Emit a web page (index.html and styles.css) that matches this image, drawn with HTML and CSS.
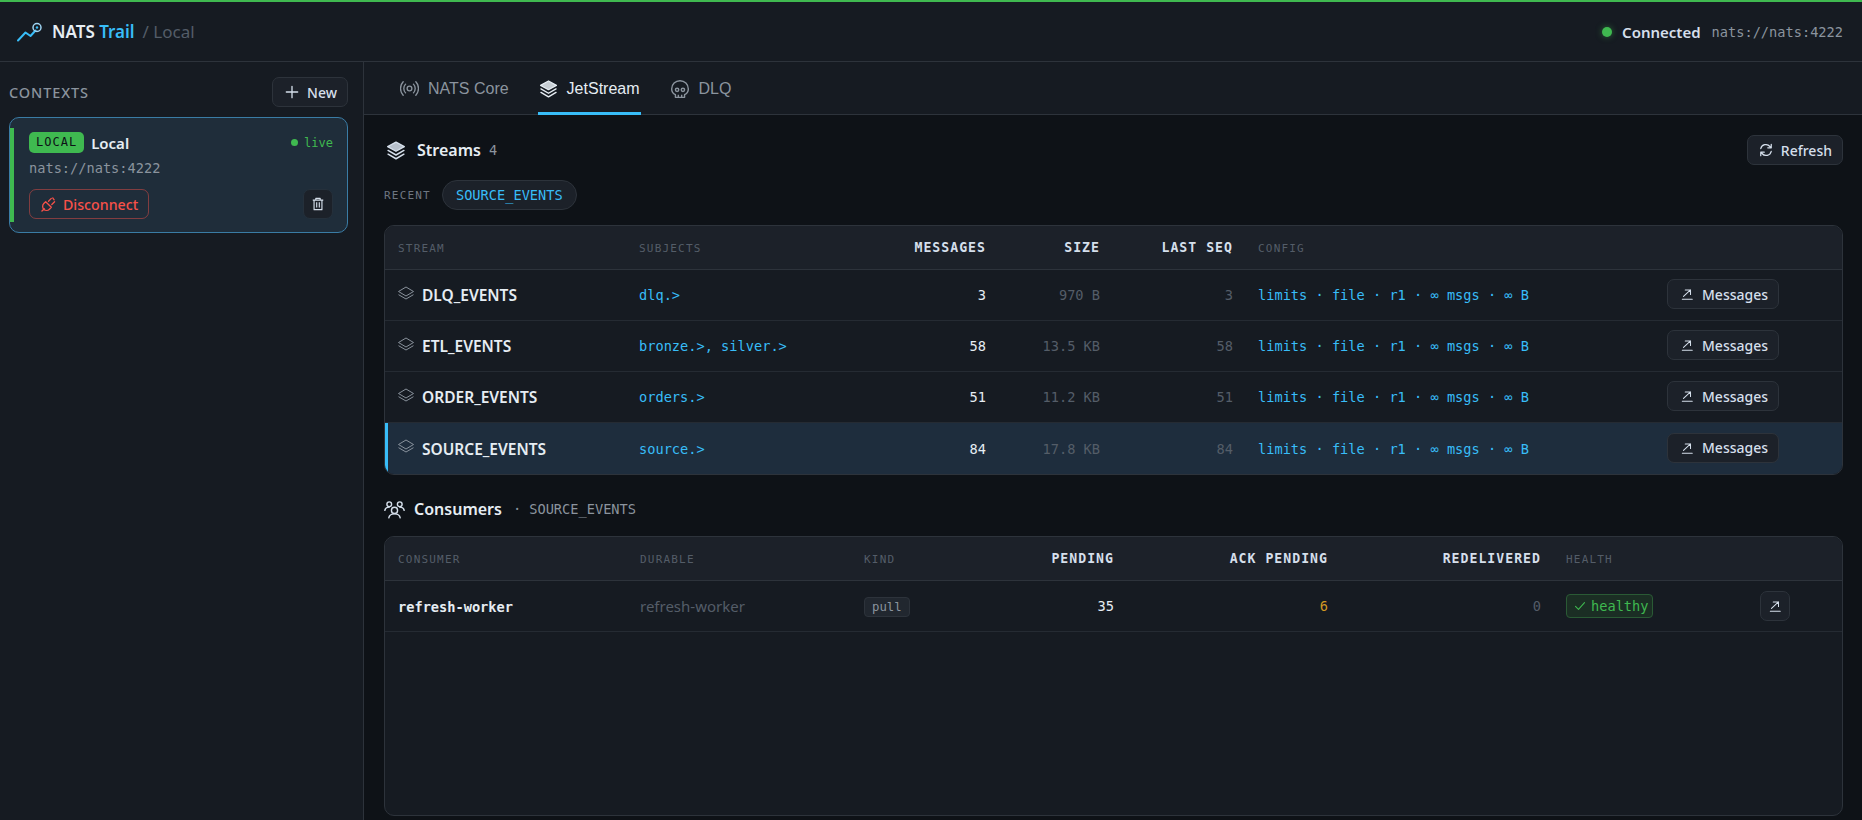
FILE: index.html
```html
<!DOCTYPE html>
<html lang="en">

<head>
    <meta charset="UTF-8">
    <meta name="viewport" content="width=device-width, initial-scale=1.0">
    <title>NATS Trail</title>
    <link rel="stylesheet" href="styles.css">
</head>

<body>
    <!-- Shared icons -->
    <svg class="sprite" xmlns="http://www.w3.org/2000/svg">
        <symbol id="i-stack-fill" viewBox="0 0 24 24">
            <path d="M12 2.500 22 8l-10 5.500L2 8z" fill="currentColor" fill-opacity=".85" stroke="currentColor" stroke-width="1.6" stroke-linejoin="round" />
            <path d="M2.500 12.500 12 18l9.500-5.500M2.500 17 12 22.500 21.500 17" fill="none" stroke="currentColor" stroke-width="1.800" stroke-linecap="round" stroke-linejoin="round" />
        </symbol>
        <symbol id="i-layer" viewBox="0 0 24 24">
            <path d="M12 4 22 10l-10 6L2 10z" fill="none" stroke="currentColor" stroke-width="1.300" stroke-linejoin="round" />
            <path d="M2.500 14.500 12 20l9.500-5.500" fill="none" stroke="currentColor" stroke-width="1.300" stroke-linecap="round" stroke-linejoin="round" />
        </symbol>
        <symbol id="i-open" viewBox="0 0 24 24">
            <path d="M6 16 18 5M9 5h9v8M4 21h17" fill="none" stroke="currentColor" stroke-width="1.800" stroke-linecap="round" stroke-linejoin="round" />
        </symbol>
    </svg>

    <div class="app">
        <header class="topbar">
            <div class="brand">
                <svg class="logo" viewBox="0 0 26 20" width="26" height="20">
                    <path d="M1 18.500 8.500 10.500 13.500 14 18.500 8.500" fill="none" stroke="#38bdf8" stroke-width="2" stroke-linecap="round" stroke-linejoin="round" />
                    <circle cx="20" cy="5.500" r="4" fill="none" stroke="#9fd4f2" stroke-width="1.500" />
                    <circle cx="20" cy="5.500" r="1.200" fill="#38bdf8" />
                </svg>
                <span class="brand-name">NATS <span class="accent">Trail</span></span>
                <span class="brand-ctx">/ Local</span>
            </div>
            <div class="status">
                <span class="status-dot"></span>
                <span class="status-text">Connected</span>
                <span class="mono status-url">nats://nats:4222</span>
            </div>
        </header>

        <div class="layout">
            <aside class="sidebar">
                <div class="sidebar-head">
                    <span class="sidebar-title">CONTEXTS</span>
                    <button class="btn">
                        <svg viewBox="0 0 16 16" width="14" height="14"><path d="M8 1.500v13M1.500 8h13" stroke="currentColor" stroke-width="1.500" stroke-linecap="round" /></svg>
                        New
                    </button>
                </div>
                <div class="ctx-card">
                    <div class="ctx-row">
                        <span class="ctx-badge">LOCAL</span>
                        <span class="ctx-name">Local</span>
                        <span class="ctx-live"><i></i>live</span>
                    </div>
                    <div class="mono ctx-url">nats://nats:4222</div>
                    <div class="ctx-actions">
                        <button class="btn-danger">
                            <svg viewBox="0 0 16 16" width="15" height="15" fill="none" stroke="currentColor" stroke-width="1.400" stroke-linecap="round" stroke-linejoin="round"><path d="M5 5 11 11 9 13a4 4 0 0 1-6-6zM3.500 12.500 1 15M8 4.500 11 1.500M11.500 8 14.500 5M12.500 1 14 3" /></svg>
                            Disconnect
                        </button>
                        <button class="btn-icon">
                            <svg viewBox="0 0 16 16" width="14" height="14" fill="none" stroke="currentColor" stroke-width="1.300" stroke-linejoin="round"><path d="M2 3.500h12M5.500 3.500V1.500h5v2M3.500 3.500v11h9v-11M6.500 6v6M9.500 6v6" /></svg>
                        </button>
                    </div>
                </div>
            </aside>

            <main class="main">
                <nav class="tabs">
                    <a class="tab">
                        <svg viewBox="0 0 24 24" width="19" height="19" fill="none" stroke="currentColor" stroke-width="1.700" stroke-linecap="round"><circle cx="12" cy="12" r="3" /><path d="M7 6.500a8 8 0 0 0 0 11M17 6.500a8 8 0 0 1 0 11M4 3.500a12.500 12.500 0 0 0 0 17M20 3.500a12.500 12.500 0 0 1 0 17" /></svg>
                        NATS Core
                    </a>
                    <a class="tab tab-active">
                        <svg width="19" height="19"><use href="#i-stack-fill" /></svg>
                        JetStream
                    </a>
                    <a class="tab">
                        <svg viewBox="0 0 24 24" width="20" height="20" fill="none" stroke="currentColor" stroke-width="1.700" stroke-linejoin="round"><path d="M12 2a10 10 0 0 0-10 10c0 3.500 1.700 5.500 4.500 6.800V22h11v-3.200C20.300 17.500 22 15.500 22 12A10 10 0 0 0 12 2z" /><circle cx="8.500" cy="13" r="2" /><circle cx="15.500" cy="13" r="2" /><path d="M10 22v-3M14 22v-3" /></svg>
                        DLQ
                    </a>
                </nav>

                <div class="content">
                    <div class="section-head">
                        <svg class="section-icon" width="20" height="20"><use href="#i-stack-fill" /></svg>
                        <h2>Streams</h2>
                        <span class="count">4</span>
                        <button class="btn btn-refresh">
                            <svg viewBox="0 0 16 16" width="14" height="14" fill="none" stroke="currentColor" stroke-width="1.400" stroke-linecap="round" stroke-linejoin="round"><path d="M2 6.500A6 6 0 0 1 12.500 4L14 5.500M14 1.500v4h-4M14 9.500A6 6 0 0 1 3.500 12L2 10.500M2 14.500v-4h4" /></svg>
                            Refresh
                        </button>
                    </div>

                    <div class="recent">
                        <span class="mono recent-label">RECENT</span>
                        <span class="mono recent-pill">SOURCE_EVENTS</span>
                    </div>

                    <div class="table-wrap">
                        <table class="data streams">
                            <colgroup>
                                <col class="c-242"><col class="c-214"><col class="c-157"><col class="c-114"><col class="c-133"><col class="c-409"><col>
                            </colgroup>
                            <thead>
                                <tr>
                                    <th>STREAM</th>
                                    <th>SUBJECTS</th>
                                    <th class="num">MESSAGES</th>
                                    <th class="num">SIZE</th>
                                    <th class="num">LAST SEQ</th>
                                    <th class="cfg">CONFIG</th>
                                    <th></th>
                                </tr>
                            </thead>
                            <tbody>
                                <tr>
                                    <td><span class="stream-name"><svg width="18" height="18"><use href="#i-layer" /></svg>DLQ_EVENTS</span></td>
                                    <td class="mono link">dlq.&gt;</td>
                                    <td class="mono val">3</td>
                                    <td class="mono val dim">970 B</td>
                                    <td class="mono val dim">3</td>
                                    <td class="mono link cfg">limits · file · r1 · ∞ msgs · ∞ B</td>
                                    <td class="act"><button class="btn"><svg width="14" height="14"><use href="#i-open" /></svg>Messages</button></td>
                                </tr>
                                <tr>
                                    <td><span class="stream-name"><svg width="18" height="18"><use href="#i-layer" /></svg>ETL_EVENTS</span></td>
                                    <td class="mono link">bronze.&gt;, silver.&gt;</td>
                                    <td class="mono val">58</td>
                                    <td class="mono val dim">13.5 KB</td>
                                    <td class="mono val dim">58</td>
                                    <td class="mono link cfg">limits · file · r1 · ∞ msgs · ∞ B</td>
                                    <td class="act"><button class="btn"><svg width="14" height="14"><use href="#i-open" /></svg>Messages</button></td>
                                </tr>
                                <tr>
                                    <td><span class="stream-name"><svg width="18" height="18"><use href="#i-layer" /></svg>ORDER_EVENTS</span></td>
                                    <td class="mono link">orders.&gt;</td>
                                    <td class="mono val">51</td>
                                    <td class="mono val dim">11.2 KB</td>
                                    <td class="mono val dim">51</td>
                                    <td class="mono link cfg">limits · file · r1 · ∞ msgs · ∞ B</td>
                                    <td class="act"><button class="btn"><svg width="14" height="14"><use href="#i-open" /></svg>Messages</button></td>
                                </tr>
                                <tr class="selected">
                                    <td><span class="stream-name"><svg width="18" height="18"><use href="#i-layer" /></svg>SOURCE_EVENTS</span></td>
                                    <td class="mono link">source.&gt;</td>
                                    <td class="mono val">84</td>
                                    <td class="mono val dim">17.8 KB</td>
                                    <td class="mono val dim">84</td>
                                    <td class="mono link cfg">limits · file · r1 · ∞ msgs · ∞ B</td>
                                    <td class="act"><button class="btn"><svg width="14" height="14"><use href="#i-open" /></svg>Messages</button></td>
                                </tr>
                            </tbody>
                        </table>
                    </div>

                    <div class="section-head consumers-head">
                        <svg class="section-icon" viewBox="0 0 24 24" width="21" height="21" fill="none" stroke="currentColor" stroke-width="1.600" stroke-linecap="round"><circle cx="12" cy="13" r="3.500" /><path d="M5.500 21.500c.5-3 3-4.500 6.500-4.500s6 1.500 6.500 4.500" /><circle cx="6" cy="6" r="2.700" /><circle cx="18" cy="6" r="2.700" /><path d="M1 13c.3-2.500 2-3.700 5-3.700M23 13c-.3-2.500-2-3.700-5-3.700" /></svg>
                        <h2>Consumers</h2>
                        <span class="crumb-sep">·</span>
                        <span class="mono crumb">SOURCE_EVENTS</span>
                    </div>

                    <div class="table-wrap table-fill">
                        <table class="data consumers">
                            <colgroup>
                                <col class="c-243"><col class="c-224"><col class="c-109"><col class="c-165"><col class="c-214"><col class="c-213"><col class="c-195"><col>
                            </colgroup>
                            <thead>
                                <tr>
                                    <th>CONSUMER</th>
                                    <th>DURABLE</th>
                                    <th>KIND</th>
                                    <th class="num">PENDING</th>
                                    <th class="num">ACK PENDING</th>
                                    <th class="num">REDELIVERED</th>
                                    <th class="cfg">HEALTH</th>
                                    <th></th>
                                </tr>
                            </thead>
                            <tbody>
                                <tr>
                                    <td class="mono consumer-name">refresh-worker</td>
                                    <td class="durable">refresh-worker</td>
                                    <td><span class="mono kind">pull</span></td>
                                    <td class="mono val">35</td>
                                    <td class="mono val warn">6</td>
                                    <td class="mono val dim">0</td>
                                    <td class="cfg">
                                        <span class="mono health">
                                            <svg viewBox="0 0 16 16" width="12" height="12" fill="none" stroke="currentColor" stroke-width="1.400" stroke-linecap="round" stroke-linejoin="round"><path d="M2 8.500 6 12.500 14 3.500" /></svg>
                                            healthy
                                        </span>
                                    </td>
                                    <td><button class="btn btn-square"><svg width="14" height="14"><use href="#i-open" /></svg></button></td>
                                </tr>
                            </tbody>
                        </table>
                    </div>
                </div>
            </main>
        </div>
    </div>
</body>

</html>
```

FILE: styles.css
```css
* {
    box-sizing: border-box;
}

body {
    font-family: "Noto Sans", Arial, sans-serif;
    background-color: #0e1217;
    color: #e6edf3;
    margin: 0;
    padding: 0;
    overflow: hidden;
}

.sprite {
    display: none;
}

.mono {
    font-family: "DejaVu Sans Mono", monospace;
}

.accent {
    color: #38bdf8;
}

.app {
    display: flex;
    flex-direction: column;
    height: 100vh;
}

/* Top bar */
.topbar {
    display: flex;
    align-items: center;
    justify-content: space-between;
    height: 62px;
    padding: 0 19px 0 17px;
    background-color: #161b22;
    border-top: 2px solid #3fb950;
    border-bottom: 1px solid #2d333b;
}

.brand {
    display: flex;
    align-items: center;
}

.logo {
    margin-right: 9px;
}

.brand-name {
    font-size: 17px;
    font-weight: 600;
}

.brand-ctx {
    margin-left: 8px;
    font-size: 17px;
    color: #545d68;
}

.status {
    display: flex;
    align-items: center;
}

.status-dot {
    width: 10px;
    height: 10px;
    border-radius: 50%;
    background-color: #3fb950;
    box-shadow: 0 0 6px rgba(63, 185, 80, 0.5);
    margin-right: 10px;
}

.status-text {
    font-size: 15px;
    font-weight: 600;
    color: #d5dfeb;
    margin-right: 11px;
}

.status-url {
    font-size: 13.650px;
    color: #8b949e;
}

.layout {
    display: flex;
    flex: 1;
    min-height: 0;
}

/* Sidebar */
.sidebar {
    width: 364px;
    padding: 15px 15px 0 9px;
    background-color: #161b22;
    border-right: 1px solid #2d333b;
}

.sidebar-head {
    display: flex;
    align-items: center;
    justify-content: space-between;
    margin-bottom: 10px;
}

.sidebar-title {
    font-size: 14.500px;
    font-weight: 500;
    letter-spacing: 0.9px;
    color: #8b949e;
}

.btn {
    display: inline-flex;
    align-items: center;
    gap: 8px;
    height: 30px;
    padding: 0 10px 0 12px;
    font-family: "Noto Sans", Arial, sans-serif;
    font-size: 14px;
    font-weight: 500;
    color: #d5dfeb;
    background-color: #1c2129;
    border: 1px solid #2d333b;
    border-radius: 7px;
}

.ctx-card {
    position: relative;
    height: 116px;
    padding: 14px 14px 0 19px;
    background-color: #1f2d3a;
    border: 1px solid #3a7ca5;
    border-radius: 10px;
}

.ctx-card::before {
    content: "";
    position: absolute;
    left: 0;
    top: 10px;
    bottom: 10px;
    width: 4px;
    background-color: #3fb950;
}

.ctx-row {
    display: flex;
    align-items: center;
    height: 21px;
}

.ctx-badge {
    padding: 0 7px;
    height: 21px;
    line-height: 21px;
    font-family: "DejaVu Sans Mono", monospace;
    font-size: 12px;
    letter-spacing: 1px;
    color: #0d1117;
    background-color: #3fb950;
    border-radius: 5px;
}

.ctx-name {
    margin-left: 7px;
    font-size: 15px;
    font-weight: 600;
}

.ctx-live {
    display: flex;
    align-items: center;
    gap: 6px;
    margin-left: auto;
    font-family: "DejaVu Sans Mono", monospace;
    font-size: 12px;
    color: #3fb950;
}

.ctx-live i {
    width: 7px;
    height: 7px;
    border-radius: 50%;
    background-color: #3fb950;
}

.ctx-url {
    margin-top: 7px;
    font-size: 13.650px;
    color: #8b949e;
}

.ctx-actions {
    display: flex;
    align-items: center;
    justify-content: space-between;
    margin-top: 12px;
}

.btn-danger {
    display: inline-flex;
    align-items: center;
    gap: 7px;
    height: 30px;
    margin-top: 1px;
    padding: 0 10px 0 11px;
    font-family: "Noto Sans", Arial, sans-serif;
    font-size: 14.200px;
    font-weight: 500;
    color: #f85149;
    background-color: transparent;
    border: 1px solid rgba(248, 81, 73, 0.45);
    border-radius: 7px;
}

.btn-icon {
    display: flex;
    align-items: center;
    justify-content: center;
    width: 30px;
    height: 30px;
    padding: 0;
    color: #d5dfeb;
    background-color: #1c2129;
    border: 1px solid #25303b;
    border-radius: 7px;
}

/* Main */
.main {
    display: flex;
    flex-direction: column;
    flex: 1;
    min-width: 0;
}

.tabs {
    display: flex;
    height: 53px;
    padding-left: 35px;
    gap: 28px;
    background-color: #161b22;
    border-bottom: 1px solid #2d333b;
}

.tab {
    display: flex;
    align-items: center;
    gap: 9px;
    height: 53px;
    padding: 0 1px;
    font-family: "Liberation Sans", Arial, sans-serif;
    font-size: 16px;
    color: #8b949e;
}

.tab-active {
    color: #e6edf3;
    border-bottom: 3px solid #38bdf8;
    padding-top: 3px;
}

.content {
    display: flex;
    flex-direction: column;
    flex: 1;
    min-height: 0;
    padding: 20px 19px 4px 20px;
}

.section-head {
    display: flex;
    align-items: center;
    height: 30px;
}

.section-icon {
    color: #d5dfeb;
    margin: 0 11px 0 2px;
}

.section-head h2 {
    margin: 0;
    font-size: 16px;
    font-weight: 600;
}

.count {
    margin-left: 8px;
    font-family: "DejaVu Sans Mono", monospace;
    font-size: 13.650px;
    color: #8b949e;
}

.btn-refresh {
    margin-left: auto;
    padding-left: 11px;
}

.recent {
    display: flex;
    align-items: center;
    gap: 11px;
    margin-top: 15px;
}

.recent-label {
    font-size: 11px;
    letter-spacing: 1.200px;
    color: #6e7681;
}

.recent-pill {
    display: flex;
    align-items: center;
    height: 30px;
    padding: 0 13px;
    font-size: 13.650px;
    color: #38bdf8;
    background-color: #1c2129;
    border: 1px solid #2d333b;
    border-radius: 15px;
}

.table-wrap {
    margin-top: 15px;
    background-color: #161b22;
    border: 1px solid #2d333b;
    border-radius: 10px;
    overflow: hidden;
}

.table-fill {
    flex: 1;
    margin-top: 14px;
}

.consumers-head {
    margin-top: 21px;
    height: 26px;
}

.consumers-head .section-icon {
    margin: 0 9px 0 0;
}

.crumb-sep {
    margin: 0 10px 0 13px;
    color: #8b949e;
}

.crumb {
    font-size: 13.650px;
    color: #8b949e;
}

/* Tables */
.data {
    width: 100%;
    table-layout: fixed;
    border-collapse: separate;
    border-spacing: 0;
}

.c-242 { width: 242px; }
.c-214 { width: 214px; }
.c-157 { width: 157px; }
.c-114 { width: 114px; }
.c-133 { width: 133px; }
.c-409 { width: 409px; }
.c-243 { width: 243px; }
.c-224 { width: 224px; }
.c-109 { width: 109px; }
.c-165 { width: 165px; }
.c-213 { width: 213px; }
.c-195 { width: 195px; }

.data th {
    height: 44px;
    padding: 2px 12px 0;
    text-align: left;
    font-family: "DejaVu Sans Mono", monospace;
    font-size: 11px;
    font-weight: 500;
    letter-spacing: 1.200px;
    color: #545d68;
    background-color: #1c2129;
    border-bottom: 1px solid #2d333b;
}

.data th:first-child,
.data td:first-child {
    padding-left: 13px;
}

.data th.num {
    padding-top: 0;
    text-align: right;
    font-size: 13.200px;
    font-weight: 700;
    letter-spacing: 1px;
    color: #d5dfeb;
}

.data td {
    height: 51px;
    padding: 0 12px;
    font-size: 14px;
    border-bottom: 1px solid #252b33;
}

.data th.cfg,
.data td.cfg {
    padding-left: 13px;
}

.streams tbody tr:last-child td {
    border-bottom: none;
}

.data td.mono {
    font-size: 13.650px;
}

.data td.link {
    color: #38bdf8;
}

.data td.val {
    text-align: right;
    color: #e6edf3;
    font-weight: 400;
}

.data td.dim {
    color: #545d68;
}

.data td.warn {
    color: #d29922;
}

.selected td {
    background-color: #1e2d3d;
}

.selected td:first-child {
    box-shadow: inset 3px 0 0 #38bdf8;
}

.stream-name {
    display: flex;
    align-items: center;
    gap: 7px;
    font-size: 15.500px;
    font-weight: 600;
    margin-left: -1px;
}

.stream-name svg {
    color: #8b949e;
    margin-top: -5px;
}

.data td.act {
    padding-left: 13px;
}

.act .btn {
    margin-top: -2px;
}

.data td.consumer-name {
    font-weight: 700;
    padding-top: 1px;
}

.data td.durable {
    font-size: 15px;
    color: #545d68;
}

.kind {
    display: inline-block;
    padding: 2px 7px;
    font-size: 12.300px;
    color: #8b949e;
    background-color: #21272f;
    border: 1px solid #2d333b;
    border-radius: 4px;
}

.health {
    display: inline-flex;
    align-items: center;
    gap: 5px;
    height: 24px;
    padding: 0 3px 0 7px;
    font-size: 13.650px;
    color: #3fb950;
    background-color: #1b2e24;
    border: 1px solid #2a5a35;
    border-radius: 4px;
}

.btn-square {
    width: 30px;
    padding: 0;
    justify-content: center;
}
```
